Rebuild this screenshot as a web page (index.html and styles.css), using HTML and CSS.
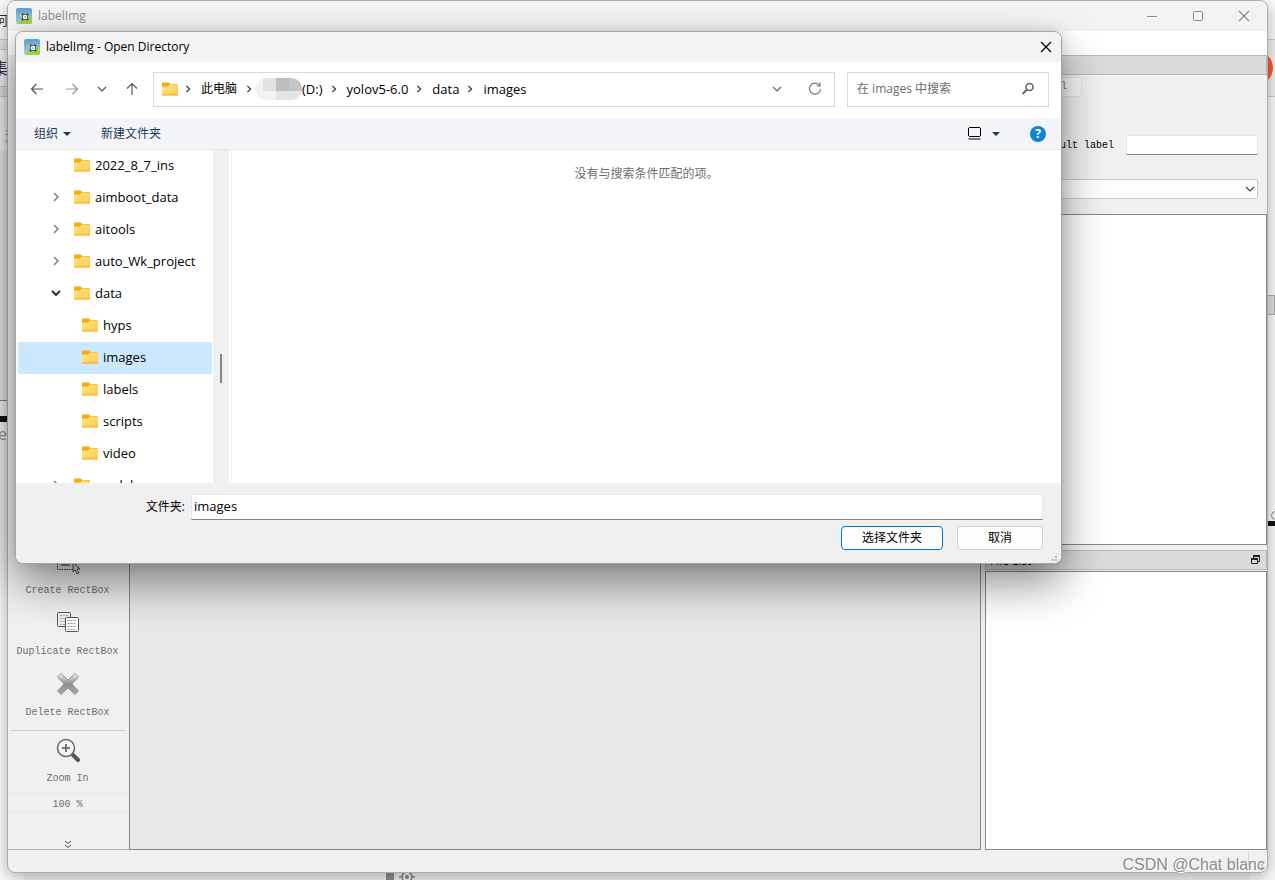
FILE: index.html
```html
<!DOCTYPE html>
<html lang="zh-CN">
<head>
<meta charset="utf-8">
<title>labelImg - Open Directory</title>
<link rel="stylesheet" href="styles.css">
</head>
<body>
<svg class="defs" aria-hidden="true">
  <defs>
    <linearGradient id="gold" x1="0" y1="0" x2="1" y2="1"><stop offset="0" stop-color="#ffe79a"/><stop offset="1" stop-color="#ffc93f"/></linearGradient>
    <linearGradient id="sky" x1="0" y1="0" x2="0" y2="1"><stop offset="0" stop-color="#5b9fd0"/><stop offset="1" stop-color="#a5d3ea"/></linearGradient>
    <linearGradient id="steel" x1="0" y1="0" x2="0" y2="1"><stop offset="0" stop-color="#f2f2f2"/><stop offset=".5" stop-color="#8f8f8f"/><stop offset="1" stop-color="#aaa"/></linearGradient>
    <symbol id="folder" viewBox="0 0 16 14">
      <path d="M0 1.500Q0 .5 1 .5h5.500q.7 0 1 .5l1 1H15q1 0 1 1v2H0z" fill="#f5ad0a"/>
      <path d="M0 4.500h6l2-2h8v10.500H0z" fill="url(#gold)"/>
      <path d="M0 12.500h16v.3q0 .7-.7.7H.7q-.7 0-.7-.7z" fill="#e9a51d"/>
    </symbol>
    <symbol id="app" viewBox="0 0 16 16">
      <rect width="16" height="16" rx="2" fill="url(#sky)"/>
      <path d="M1 16 5 11l4 1 4-7 3 7v2q0 2-2 2z" fill="#9bd541"/>
      <circle cx="5.500" cy="7" r="1.500" fill="#f3e34c"/>
      <rect x="6.500" y="6.500" width="5" height="5" fill="#fff" stroke="#5b6468"/>
      <path d="M5.500 5.500h2v2h-2zM10.500 5.500h2v2h-2zM5.500 10.500h2v2h-2zM10.500 10.500h2v2h-2z" fill="#46505a"/>
      <circle cx="9" cy="9" r="1" fill="#aaa"/>
    </symbol>
    <symbol id="right" viewBox="0 0 10 10"><path d="M3 1l4 4-4 4" fill="none" stroke="currentColor" stroke-width="1.500"/></symbol>
    <symbol id="down" viewBox="0 0 10 10"><path d="M1 3l4 4 4-4" fill="none" stroke="currentColor" stroke-width="1.200"/></symbol>
    <symbol id="down-bold" viewBox="0 0 10 10"><path d="M1 3l4 4 4-4" fill="none" stroke="currentColor" stroke-width="1.800"/></symbol>
    <symbol id="caret" viewBox="0 0 8 4"><path d="M0 0h8L4 4z" fill="currentColor"/></symbol>
    <symbol id="close" viewBox="0 0 12 12"><path d="M1 1l10 10M11 1L1 11" stroke="currentColor" stroke-width="1.200"/></symbol>
  </defs>
</svg>

<div class="desktop">
  <div class="behind behind-left">
    <span class="glyph glyph-a">何</span>
    <span class="rule rule-a"></span>
    <span class="glyph glyph-b">集</span>
    <span class="rule rule-b"></span>
    <span class="glyph glyph-c">选</span>
    <span class="panel-edge"></span>
    <span class="black-bar"></span>
    <span class="glyph glyph-d">e</span>
  </div>
  <div class="behind behind-right">
    <span class="band"></span>
    <span class="disc"></span>
    <span class="thumb"></span>
    <span class="ring"></span>
    <span class="black-bar black-bar-right"></span>
  </div>
  <div class="behind-bottom">
    <span class="stub"></span>
    <svg width="16" height="16" viewBox="0 0 16 16"><g fill="none" stroke="#858585" stroke-width="1.500"><circle cx="8" cy="8" r="5"/><path d="M0 8h4M12 8h4M8 0v4M8 12v4"/></g><circle cx="8" cy="8" r="2" fill="#888"/></svg>
  </div>

  <main class="window">
    <header class="titlebar">
      <svg class="app-icon"><use href="#app"/></svg>
      <span class="title">labelImg</span>
      <button class="sys" aria-label="Minimize"><svg width="12" height="12"><path d="M1 6.500h10" stroke="currentColor"/></svg></button>
      <button class="sys" aria-label="Maximize"><svg width="12" height="12"><rect x="1.500" y="1.500" width="9" height="9" rx="1" fill="none" stroke="currentColor"/></svg></button>
      <button class="sys" aria-label="Close"><svg width="12" height="12"><use href="#close"/></svg></button>
    </header>
    <div class="menubar"></div>
    <div class="workspace">
      <nav class="tools">
        <button class="tool">
          <svg width="24" height="24" viewBox="0 0 24 24"><rect x="1.500" y="3.500" width="16" height="16" fill="none" stroke="#333" stroke-dasharray="1.500 1"/><path d="M5 12q5-4 9 0v4H5z" fill="#888"/><path d="M17 12v10l2-2 2 4 2-1-2-4h3z" fill="#ddd" stroke="#555"/></svg>
          <span>Create RectBox</span>
        </button>
        <button class="tool">
          <svg width="24" height="24" viewBox="0 0 24 24"><rect x="1.500" y="1.500" width="13" height="14" rx="1" fill="#eee" stroke="#555"/><path d="M4 4.500h8M4 7.500h8M4 10.500h5M4 13.500h5" stroke="#aaa" stroke-dasharray="2 1"/><rect x="9.500" y="6.500" width="13" height="14" rx="1" fill="#fff" stroke="#555"/><path d="M11.500 9.500h9M11.500 12.500h9M11.500 15.500h9M11.500 18.500h9" stroke="#999" stroke-dasharray="2 1"/></svg>
          <span>Duplicate RectBox</span>
        </button>
        <button class="tool">
          <svg width="24" height="24" viewBox="0 0 24 24"><path d="M5 1.500 12 8l7-6.500L22.500 5 16 12l6.500 7-3.500 3.500-7-6.500-7 6.500L1.500 19 8 12 1.500 5z" fill="url(#steel)" stroke="#999" stroke-linejoin="round"/></svg>
          <span>Delete RectBox</span>
        </button>
        <hr class="tool-rule">
        <button class="tool tool-zoom">
          <svg width="24" height="24" viewBox="0 0 24 24"><path d="M17 17l5 5" stroke="#555" stroke-width="4" stroke-linecap="round"/><circle cx="10" cy="10" r="8.500" fill="#f5f5f5" stroke="#666" stroke-width="1.500"/><path d="M6 10h8M10 6v8" stroke="#777" stroke-width="2"/></svg>
          <span>Zoom In</span>
        </button>
        <output class="zoom-value">100 %</output>
        <button class="more" aria-label="More tools"><svg width="8" height="9"><path d="M1 1l3 2.500L7 1M1 5l3 2.500L7 5" fill="none" stroke="#444"/></svg></button>
      </nav>
      <section class="canvas" aria-label="Canvas"></section>
      <aside class="docks">
        <div class="dock-title"></div>
        <div class="label-tools">
          <button class="edit-label">Edit Label</button>
          <div class="label-row">
            <label for="default-label">default label</label>
            <input id="default-label" class="default-label" type="text">
          </div>
          <div class="combo">
            <select class="combo-select" aria-label="Label filter"><option></option></select>
            <svg class="combo-arrow"><use href="#down"/></svg>
          </div>
        </div>
        <div class="list list-top"></div>
        <div class="dock-title dock-title-files">
          <span class="dock-name">File List</span>
          <button class="float" aria-label="Float panel"><svg width="9" height="10"><path d="M2.500 3V1.500h6v5H6M.5 4.500h6v4h-6z" fill="none" stroke="#222"/><path d="M2 1h7M0 4h7" stroke="#222" stroke-width="2"/></svg></button>
        </div>
        <div class="list list-files"></div>
      </aside>
    </div>
    <footer class="statusbar"><span class="status-split"></span><span class="grip grip-main"></span></footer>
  </main>

  <section class="dialog" role="dialog" aria-labelledby="dialog-title">
    <header class="dialog-title">
      <svg class="app-icon"><use href="#app"/></svg>
      <h1 id="dialog-title">labelImg - Open Directory</h1>
      <button class="dialog-close" aria-label="Close"><svg width="12" height="12"><use href="#close"/></svg></button>
    </header>
    <div class="navigation">
      <div class="arrows">
        <button class="arrow" aria-label="Back"><svg width="14" height="14" viewBox="0 0 14 14"><path d="M13 7H1.500M6.500 2l-5 5 5 5" fill="none" stroke="#555" stroke-width="1.200"/></svg></button>
        <button class="arrow arrow-forward" aria-label="Forward"><svg width="14" height="14" viewBox="0 0 14 14"><path d="M1 7h11.500M7.500 2l5 5-5 5" fill="none" stroke="#999" stroke-width="1.200"/></svg></button>
        <button class="arrow arrow-recent" aria-label="Recent"><svg width="10" height="10"><use href="#down"/></svg></button>
        <button class="arrow arrow-up" aria-label="Up"><svg width="14" height="14" viewBox="0 0 14 14"><path d="M7 13V1.500M2 6.500l5-5 5 5" fill="none" stroke="#555" stroke-width="1.200"/></svg></button>
      </div>
      <div class="address">
        <svg class="folder"><use href="#folder"/></svg>
        <svg class="crumb"><use href="#right"/></svg>
        <a href="#pc" class="place">此电脑</a>
        <svg class="crumb crumb-drive"><use href="#right"/></svg>
        <span class="mosaic"><i></i><i></i><i></i><i></i><i></i><i></i><i></i><i></i></span>
        <a href="#d">(D:)</a>
        <svg class="crumb"><use href="#right"/></svg>
        <a href="#yolo">yolov5-6.0</a>
        <svg class="crumb"><use href="#right"/></svg>
        <a href="#data">data</a>
        <svg class="crumb"><use href="#right"/></svg>
        <a href="#images">images</a>
        <button class="history" aria-label="History"><svg width="10" height="10"><use href="#down"/></svg></button>
        <button class="refresh" aria-label="Refresh"><svg width="14" height="14" viewBox="0 0 14 14"><path d="M11.500 3.500A5.500 5.500 0 1 0 12.500 7M12 .5v3.500H8.500" fill="none" stroke="#777" stroke-width="1.200"/></svg></button>
      </div>
      <div class="search">
        <input type="text" aria-label="Search" placeholder="在 images 中搜索">
        <svg width="14" height="14" viewBox="0 0 14 14"><circle cx="8.500" cy="5" r="3.500" fill="none" stroke="#666" stroke-width="1.600"/><path d="M6 7.500 1.500 12" stroke="#666" stroke-width="2"/></svg>
      </div>
    </div>
    <div class="commands">
      <button class="command">组织 <svg class="caret"><use href="#caret"/></svg></button>
      <button class="command">新建文件夹</button>
      <button class="view" aria-label="View"><svg width="13" height="13"><path d="M1 .5h11M1 9.500h11M.5 1v8M12.500 1v8M.5 12h12" stroke="#000" fill="none"/></svg><svg class="caret"><use href="#caret"/></svg></button>
      <button class="help" aria-label="Help">?</button>
    </div>
    <div class="browser">
      <ul class="tree">
        <li><span class="twist"></span><svg class="folder"><use href="#folder"/></svg>2022_8_7_ins</li>
        <li><svg class="twist"><use href="#right"/></svg><svg class="folder"><use href="#folder"/></svg>aimboot_data</li>
        <li><svg class="twist"><use href="#right"/></svg><svg class="folder"><use href="#folder"/></svg>aitools</li>
        <li><svg class="twist"><use href="#right"/></svg><svg class="folder"><use href="#folder"/></svg>auto_Wk_project</li>
        <li><svg class="twist open"><use href="#down-bold"/></svg><svg class="folder"><use href="#folder"/></svg>data</li>
        <li class="child"><svg class="folder"><use href="#folder"/></svg>hyps</li>
        <li class="child selected"><svg class="folder"><use href="#folder"/></svg>images</li>
        <li class="child"><svg class="folder"><use href="#folder"/></svg>labels</li>
        <li class="child"><svg class="folder"><use href="#folder"/></svg>scripts</li>
        <li class="child"><svg class="folder"><use href="#folder"/></svg>video</li>
        <li><svg class="twist"><use href="#right"/></svg><svg class="folder"><use href="#folder"/></svg>models</li>
      </ul>
      <div class="scrollbar"><span class="scroll-thumb"></span></div>
      <p class="empty">没有与搜索条件匹配的项。</p>
    </div>
    <footer class="dialog-footer">
      <div class="name-row">
        <label for="folder-name">文件夹:</label>
        <input id="folder-name" class="folder-name" type="text" value="images">
      </div>
      <div class="actions">
        <button class="action primary">选择文件夹</button>
        <button class="action">取消</button>
      </div>
      <span class="grip grip-dialog"></span>
    </footer>
  </section>
  <span class="watermark">CSDN @Chat blanc</span>
</div>
</body>
</html>
```
FILE: styles.css
```css
* { box-sizing: border-box; }

body {
  margin: 0;
  font: 12px/16px "Open Sans", "Noto Sans CJK SC", sans-serif;
  color: #000;
}

button {
  padding: 0;
  border: 0;
  background: none;
  color: inherit;
  font: inherit;
}

input { font: inherit; outline: 0; }
a { color: inherit; text-decoration: none; }
svg { display: block; flex: none; }
.defs { position: absolute; width: 0; height: 0; }

.desktop {
  position: relative;
  height: 100vh;
  overflow: hidden;
  background: #f2f2f2;
}

/* Windows lying behind */
.behind {
  position: absolute;
  top: 0;
  bottom: 0;
  width: 24px;
  overflow: hidden;
  background: #fafafa;
}
.behind-left { left: 0; }
.behind-right { right: 0; }
.behind span { position: absolute; }
.glyph { font-size: 16px; line-height: 20px; white-space: nowrap; color: #333; }
.glyph-a { left: -5px; top: 10px; font-size: 13px; }
.glyph-b { left: -8px; top: 58px; }
.glyph-c { left: 5px; top: 125px; font-size: 13px; color: #b06a35; }
.glyph-d { left: -2px; top: 424px; color: #999; }
.rule { left: 0; width: 24px; border: solid #ccc; border-width: 1px 0; background: #e8e8e8; }
.rule-a { top: 39px; height: 11px; }
.rule-b { top: 86px; height: 11px; }
.panel-edge { top: 150px; width: 24px; height: 251px; border-bottom: 1px solid #889; background: #eee; }
.black-bar { top: 416px; width: 24px; height: 6px; background: #111; }
.black-bar-right { top: 521px; height: 5px; }
.band { top: 39px; width: 24px; height: 58px; border: solid #ccc; border-width: 1px 0; background: #eee; }
.disc { right: 2px; top: 51px; width: 34px; height: 34px; border-radius: 50%; background: #fc5531; }
.thumb { top: 295px; width: 24px; height: 20px; border: 1px solid #aaa; background: #ddd; }
.ring { right: -5px; top: 511px; width: 9px; height: 9px; border: 1px solid #888; border-radius: 50%; }
.behind-bottom {
  position: absolute;
  left: 386px;
  bottom: -5px;
  display: flex;
  gap: 5px;
}
.stub { width: 8px; height: 13px; background: #8c8c8c; }

/* Main window */
.window {
  position: absolute;
  inset: 0 7px 7px 7px;
  display: flex;
  flex-direction: column;
  overflow: hidden;
  border: 1px solid #adadad;
  border-radius: 8px;
  background: #f0f0f0;
  box-shadow: 0 4px 16px rgba(0, 0, 0, .3);
}
.titlebar {
  display: flex;
  align-items: center;
  height: 30px;
  padding-left: 8px;
  background: #f3f3f3;
  color: #8b8b8b;
}
.app-icon { width: 16px; height: 16px; }
.title { flex: 1; padding-left: 6px; }
.sys { display: flex; justify-content: center; width: 46px; }
.menubar { height: 24px; background: #fff; }
.workspace {
  flex: 1;
  display: grid;
  grid-template-columns: 121px minmax(0, 1fr) 282px;
  min-height: 0;
}
.tools {
  display: flex;
  flex-direction: column;
  justify-content: flex-end;
  align-items: stretch;
  padding-right: 2px;
  border-bottom: 1px solid #b5b5b5;
  color: #6f6f6f;
  font: 10px/16px "Liberation Mono", monospace;
}
.tool {
  display: flex;
  flex-direction: column;
  align-items: center;
  gap: 9px;
  height: 61px;
  padding-top: 3px;
}
.tool-rule { width: 116px; height: 1px; margin: 0 auto 4px; border: 0; background: #cfcfcf; }
.tool-zoom { height: 58px; }
.zoom-value {
  height: 20px;
  padding-top: 3px;
  border: solid #e8e8e8;
  border-width: 1px 0;
  text-align: center;
}
.more { display: flex; justify-content: center; margin-top: 27px; }
.canvas { margin-right: 4px; border: 1px solid #828790; background: #e8e8e8; }
.docks { display: flex; flex-direction: column; font: 10px/16px "Liberation Mono", monospace; }
.dock-title { height: 20px; border: 1px solid #b9b9b9; background: #dadada; }
.label-tools {
  display: flex;
  flex-direction: column;
  height: 139px;
  padding: 2px 9px 0 0;
}
.edit-label {
  width: 97px;
  height: 20px;
  padding-right: 14px;
  border: 1px solid #e6e6e6;
  border-radius: 3px;
  background: #f8f8f8;
  color: #777;
  text-align: right;
}
.label-row { display: flex; justify-content: flex-end; align-items: center; gap: 12px; margin-top: 38px; }
.label-row label { padding-top: 2px; }
.default-label { width: 132px; height: 20px; border: 1px solid #e8e8e8; border-bottom-color: #868686; background: #fff; }
.combo { position: relative; margin-top: 24px; }
.combo-select {
  display: block;
  width: 100%;
  height: 20px;
  border: 1px solid #ccc;
  border-radius: 2px;
  background: #fdfdfd;
  appearance: none;
}
.combo-arrow { position: absolute; right: 3px; top: 5px; width: 10px; height: 10px; color: #444; }
.list { border: 1px solid #828790; background: #fff; }
.list-top { flex: 331; }
.dock-title-files {
  display: flex;
  justify-content: space-between;
  align-items: center;
  margin: 5px 0 1px;
  padding: 0 6px 0 4px;
  font: 12px/16px "Open Sans", sans-serif;
}
.dock-name { padding-top: 3px; }
.list-files { flex: 279; }
.statusbar { display: flex; justify-content: flex-end; align-items: stretch; height: 22px; }
.status-split { width: 1px; margin: 2px 0 6px; background: #d4d4d4; }
.grip {
  width: 9px;
  height: 9px;
  background: repeating-linear-gradient(90deg, transparent 0 2px, #f0f0f0 2px 3px), repeating-linear-gradient(#bbb 0 2px, #f0f0f0 2px 3px);
  clip-path: polygon(100% 0, 100% 100%, 0 100%);
}
.grip-main { align-self: flex-end; margin: 0 3px 2px 6px; }

/* Folder dialog */
.dialog {
  position: absolute;
  inset: 31px 213px 316px 15px;
  display: flex;
  flex-direction: column;
  overflow: hidden;
  border: 1px solid #a5a5a5;
  border-radius: 8px;
  background: #fff;
  box-shadow: 0 20px 44px rgba(0, 0, 0, .44), 0 0 12px rgba(0, 0, 0, .12);
}
.dialog-title {
  display: flex;
  align-items: center;
  height: 30px;
  padding: 0 9px 0 8px;
  background: #f3f3f3;
}
.dialog-title h1 { flex: 1; margin: 0; padding-left: 6px; font: inherit; }
.navigation { display: flex; align-items: center; height: 56px; padding: 0 12px 2px 8px; }
.arrows { display: flex; align-items: center; width: 129px; color: #555; }
.arrow { display: flex; justify-content: center; width: 26px; }
.arrow-forward { width: 44px; }
.arrow-recent { width: 16px; }
.arrow-up { width: 43px; }
.address {
  flex: 1;
  display: flex;
  align-items: center;
  height: 35px;
  padding: 0 12px 0 8px;
  border: 1px solid #d9d9d9;
  font-size: 13px;
}
.folder { width: 16px; height: 14px; }
.address .place { font-size: 12px; }
.address .crumb { width: 8px; height: 8px; margin: 0 9px 0 7px; color: #333; }
.address .folder + .crumb { margin: 0 9px 0 6px; }
.address .crumb-drive { margin: 0 2px 0 8px; }
.mosaic {
  display: grid;
  grid-template: 13px 9px / 8px repeat(3, 13px);
  width: 47px;
  height: 22px;
  overflow: hidden;
  border-radius: 11px;
}
.mosaic i { background: #f3f3f3; }
.mosaic i:nth-child(2) { background: #e2e2e2; }
.mosaic i:nth-child(3) { background: #bdbdbd; }
.mosaic i:nth-child(4) { background: #c5c5c5; }
.mosaic i:nth-child(n + 7) { background: #e4e4e4; }
.history { margin-left: auto; color: #666; }
.refresh { margin-left: 26px; }
.search {
  display: flex;
  align-items: center;
  width: 202px;
  height: 35px;
  margin-left: 12px;
  padding: 0 13px 0 9px;
  border: 1px solid #d9d9d9;
}
.search input { flex: 1; min-width: 0; padding: 0; border: 0; }
.search input::placeholder { color: #6d6d6d; opacity: 1; }
.commands {
  display: flex;
  align-items: center;
  height: 32px;
  padding: 0 15px 0 18px;
  border-bottom: 1px solid #e5e6e8;
  background: #f4f5f8;
  color: #1e395b;
}
.command { display: flex; align-items: center; gap: 5px; margin-right: 30px; }
.caret { width: 8px; height: 4px; }
.view { display: flex; align-items: center; gap: 11px; margin-left: auto; }
.help {
  width: 16px;
  height: 16px;
  margin-left: 30px;
  border-radius: 50%;
  background: #0f83d8;
  color: #fff;
  font-weight: 700;
}
.browser { flex: 1; display: flex; min-height: 0; }
.tree { width: 197px; margin: 0; padding: 0; overflow: hidden; list-style: none; font-size: 13px; }
.tree li { display: flex; align-items: center; height: 32px; margin: 0 1px 0 2px; padding: 0 0 2px 33px; }
.tree .child { padding-left: 64px; }
.tree .selected { border-radius: 2px; background: #cce8ff; }
.tree .folder { margin-right: 5px; }
.twist { width: 10px; height: 10px; margin-right: 13px; color: #808080; }
.open { color: #222; }
.scrollbar { width: 16px; padding: 204px 7px 0; background: #f0f0f0; }
.scroll-thumb { display: block; width: 2px; height: 29px; background: #858585; }
.empty { flex: 1; margin: 0 0 0 2px; padding-top: 16px; border-left: 1px solid #f0f0f0; color: #6d6d6d; text-align: center; }
.dialog-footer { position: relative; height: 80px; padding: 11px 18px 0 17px; background: #f0f0f0; }
.name-row { display: flex; align-items: center; gap: 6px; }
.name-row label { width: 152px; text-align: right; }
.folder-name {
  flex: 1;
  height: 26px;
  padding: 0 2px 2px;
  border: 1px solid #e8e8e8;
  border-bottom-color: #868686;
  background: #fff;
  font-size: 13px;
}
.actions { display: flex; justify-content: flex-end; gap: 14px; margin-top: 6px; }
.action { width: 86px; height: 24px; border: 1px solid #d0d0d0; border-radius: 4px; background: #fdfdfd; }
.primary { width: 102px; border-color: #0078d4; }
.grip-dialog { position: absolute; right: 3px; bottom: 1px; }

.watermark {
  position: absolute;
  right: 10px;
  bottom: 6px;
  color: #8b8b8b;
  font: 16px/18px "Liberation Sans", sans-serif;
  text-shadow: 1px 1px #fff;
}
```
